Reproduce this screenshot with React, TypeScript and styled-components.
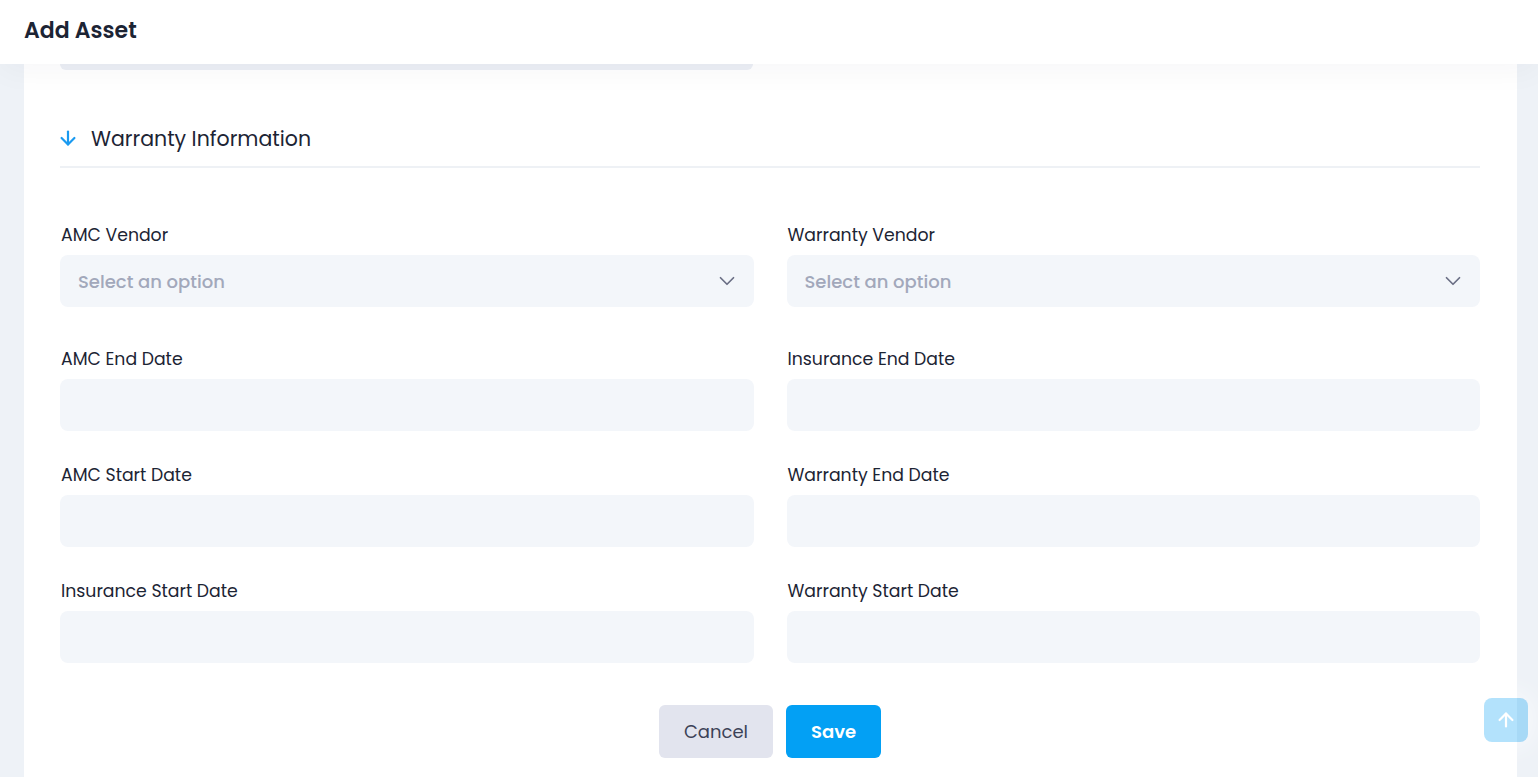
import React from "react";
import styled, { createGlobalStyle } from "styled-components";
import { ArrowDown, ArrowUp, ChevronDown } from "lucide-react";

const GlobalStyle = createGlobalStyle`
  html, body {
    margin: 0;
    padding: 0;
    background: #eef2f7;
    font-family: Poppins, Inter, "Noto Sans", sans-serif;
    color: #1c2434;
    overflow: hidden;
  }
  * { box-sizing: border-box; }
`;

type Field = {
  label: string;
  select?: boolean;
};

const leftFields: Field[] = [
  { label: "AMC Vendor", select: true },
  { label: "AMC End Date" },
  { label: "AMC Start Date" },
  { label: "Insurance Start Date" },
];

const rightFields: Field[] = [
  { label: "Warranty Vendor", select: true },
  { label: "Insurance End Date" },
  { label: "Warranty End Date" },
  { label: "Warranty Start Date" },
];

const Page = styled.div`
  min-height: 100vh;
  display: flex;
  flex-direction: column;
`;

const TopBar = styled.header`
  position: relative;
  z-index: 2;
  height: 64px;
  flex-shrink: 0;
  display: flex;
  align-items: center;
  padding: 0 24px 4px;
  background: #ffffff;
  box-shadow: 0 8px 30px rgba(30, 40, 70, 0.035);

  h1 {
    margin: 0;
    font-size: 22px;
    font-weight: 600;
    color: #1c2434;
  }
`;

const Main = styled.main`
  flex: 1;
  display: flex;
  padding: 0 21px 0 24px;
`;

const Card = styled.section`
  flex: 1;
  background: #ffffff;
  padding: 0 37px 40px 36px;
`;

const PrevFieldTail = styled.div`
  width: 693px;
  height: 6px;
  background: #eceff5;
  border-radius: 0 0 8px 8px;
`;

const SectionHead = styled.div`
  display: flex;
  align-items: center;
  gap: 12px;
  height: 98px;
  padding: 48px 0 0 0;
  border-bottom: 2px solid #eef1f5;
  margin-bottom: 55px;

  svg {
    color: #1a9af0;
    margin: -8px 0 0 -3px;
  }

  h2 {
    margin: -8px 0 0;
    font-size: 20.5px;
    font-weight: 400;
    color: #1c2434;
  }
`;

const FieldGrid = styled.div`
  display: grid;
  grid-template-columns: 1fr 1fr;
  column-gap: 33px;
`;

const Column = styled.div`
  display: flex;
  flex-direction: column;
  gap: 32px;
`;

const FieldBox = styled.label<{ $select?: boolean }>`
  display: flex;
  flex-direction: column;
  gap: 8px;
  margin-bottom: ${({ $select }) => ($select ? "8px" : "0")};

  span {
    font-size: 17.3px;
    line-height: 24px;
    font-weight: 400;
    color: #1c2434;
    padding-left: 1px;
  }
`;

const InputShell = styled.div<{ $select?: boolean }>`
  height: 52px;
  border-radius: 8px;
  background: #f3f6fa;
  display: flex;
  align-items: center;
  justify-content: space-between;
  padding: 0 14px 0 18px;
  font-size: 18px;
  font-weight: 500;
  color: #a2a8bb;
  cursor: ${({ $select }) => ($select ? "pointer" : "text")};

  svg {
    color: #6b6f85;
  }
`;

const Actions = styled.div`
  display: flex;
  justify-content: center;
  gap: 13px;
  margin-top: 42px;
`;

const Button = styled.button<{ $primary?: boolean }>`
  height: 53px;
  padding: 0 25px;
  border: none;
  border-radius: 6px;
  font-family: inherit;
  font-size: 18px;
  font-weight: ${({ $primary }) => ($primary ? 600 : 400)};
  background: ${({ $primary }) => ($primary ? "#03a0f4" : "#e2e4ee")};
  color: ${({ $primary }) => ($primary ? "#ffffff" : "#3c4257")};
  cursor: pointer;
`;

const ScrollTop = styled.button`
  position: fixed;
  right: 10px;
  bottom: 35px;
  width: 44px;
  height: 44px;
  border: none;
  border-radius: 8px;
  background: rgba(3, 160, 244, 0.3);
  box-shadow: 0 0 30px rgba(255, 255, 255, 0.9);
  display: flex;
  align-items: center;
  justify-content: center;
  color: #ffffff;
  cursor: pointer;
`;

const FieldItem: React.FC<Field> = ({ label, select }) => (
  <FieldBox $select={select}>
    <span>{label}</span>
    <InputShell $select={select}>
      {select ? "Select an option" : ""}
      {select && <ChevronDown size={26} strokeWidth={1.6} />}
    </InputShell>
  </FieldBox>
);

export default function App() {
  return (
    <Page>
      <GlobalStyle />
      <TopBar>
        <h1>Add Asset</h1>
      </TopBar>
      <Main>
        <Card>
          <PrevFieldTail />
          <SectionHead>
            <ArrowDown size={22} strokeWidth={2.4} />
            <h2>Warranty Information</h2>
          </SectionHead>
          <FieldGrid>
            <Column>
              {leftFields.map((f) => (
                <FieldItem key={f.label} {...f} />
              ))}
            </Column>
            <Column>
              {rightFields.map((f) => (
                <FieldItem key={f.label} {...f} />
              ))}
            </Column>
          </FieldGrid>
          <Actions>
            <Button>Cancel</Button>
            <Button $primary>Save</Button>
          </Actions>
        </Card>
      </Main>
      <ScrollTop aria-label="Scroll to top">
        <ArrowUp size={22} strokeWidth={2.4} />
      </ScrollTop>
    </Page>
  );
}
